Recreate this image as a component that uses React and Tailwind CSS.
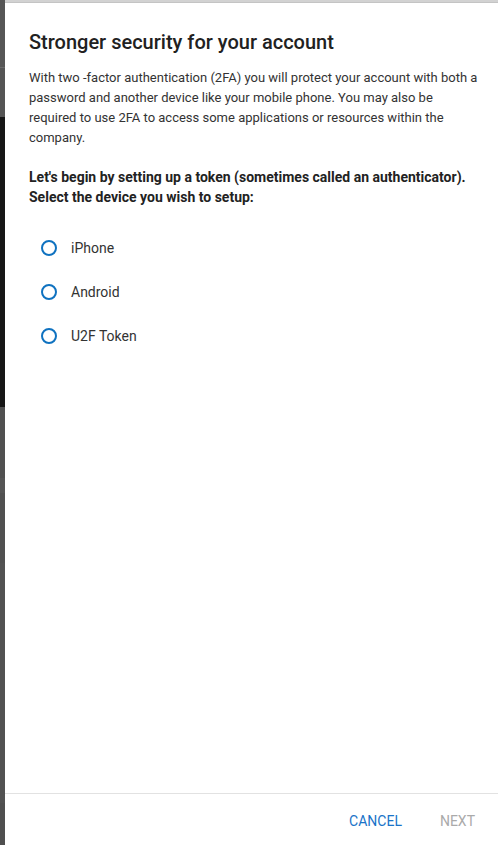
const devices = ['iPhone', 'Android', 'U2F Token']

function Radio({ label }) {
  return (
    <label className="flex items-center h-[44px] cursor-pointer">
      <span className="ml-[12px] w-[16px] h-[16px] rounded-full border-2 border-[#0f72c0]" />
      <span className="ml-[14px] text-[14px] text-[#333]">{label}</span>
    </label>
  )
}

export default function App() {
  return (
    <div className="h-[845px] flex bg-white overflow-hidden" style={{ fontFamily: 'Roboto, "Liberation Sans", sans-serif' }}>
      {/* backdrop sliver on the left */}
      <div className="w-[5px] flex flex-col">
        <div className="h-[67px] bg-[#565656]" />
        <div className="h-[1px] bg-[#6a6a6a]" />
        <div className="h-[49px] bg-[#555]" />
        <div className="h-[290px] bg-[#161616]" />
        <div className="h-[71px] bg-[#505050]" />
        <div className="h-[15px] bg-[#555]" />
        <div className="h-[70px] bg-[#505050]" />
        <div className="h-[240px] bg-[#525252]" />
        <div className="flex-1 bg-[#4f4f4f]" />
      </div>

      <div className="flex-1 flex flex-col">
        <div className="h-[3px] bg-[#d2d2d2] border-b border-[#c4c4c4]" />

        <div className="flex-1 flex flex-col pl-[24px] pr-[16px] pt-[25px]">
          <h1 className="text-[20px] leading-[28px] font-medium text-[#212121]">Stronger security for your account</h1>
          <p className="mt-[12px] text-[13px] leading-[20px] text-[#333]">
            With two -factor authentication (2FA) you will protect your account with both a password and another device like your mobile phone. You may also be required to use 2FA to access some applications or resources within the company.
          </p>
          <p className="mt-[19px] text-[14px] leading-[20px] font-bold text-[#222]">
            Let's begin by setting up a token (sometimes called an authenticator). Select the device you wish to setup:
          </p>
          <div className="mt-[19px] flex flex-col">
            {devices.map((d) => (
              <Radio key={d} label={d} />
            ))}
          </div>
        </div>

        <div className="h-[52px] border-t border-[#e2e2e2] flex items-start justify-end pt-[9px] pr-[15px] gap-[22px]">
          <button className="px-2 h-9 text-[14px] text-[#1a73c8]">CANCEL</button>
          <button className="px-2 h-9 text-[14px] text-[#aaaaaa]">NEXT</button>
        </div>
      </div>
    </div>
  )
}
